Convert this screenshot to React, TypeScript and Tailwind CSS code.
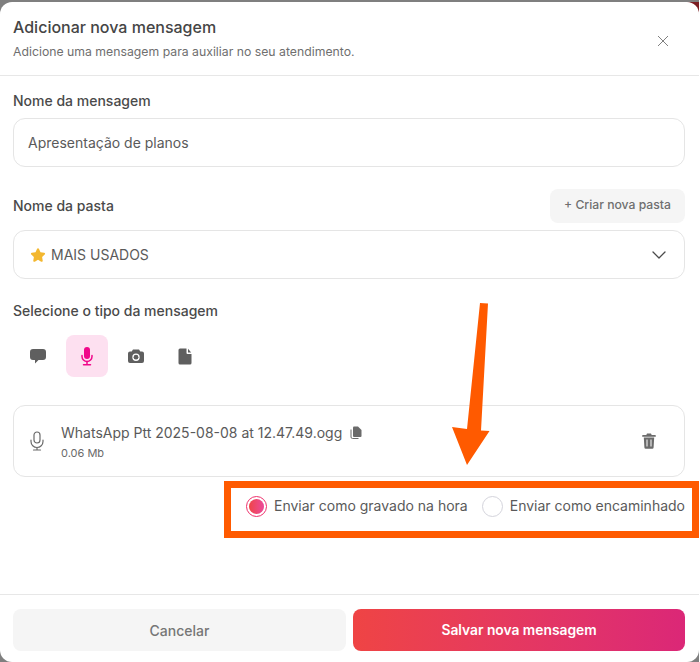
import React from "react";

const font = { fontFamily: "Inter, 'Liberation Sans', sans-serif" };

function Chevron() {
  return (
    <svg width="14" height="8" viewBox="0 0 14 8" fill="none" stroke="#4b4b4b" strokeWidth="1.3" strokeLinecap="round" strokeLinejoin="round">
      <path d="M1 1l6 6 6-6" />
    </svg>
  );
}

function Star() {
  return (
    <svg width="16" height="16" viewBox="0 0 16 16">
      <path d="M8 1.200c.5 0 .8.3 1 .8l1.500 3.200 3.600.5c1 .2 1.300 1.100.6 1.800l-2.600 2.500.6 3.600c.2 1-.7 1.500-1.500 1.100L8 12.800l-3.200 1.900c-.8.4-1.700-.1-1.500-1.100l.6-3.600L1.300 7.500c-.7-.7-.4-1.600.6-1.800l3.600-.5L7 2c.2-.5.5-.8 1-.8z" fill="#f3b72f" />
    </svg>
  );
}

function MicSolid({ color, size = 22 }: { color: string; size?: number }) {
  return (
    <svg width={size} height={size} viewBox="0 0 22 22" fill="none">
      <rect x="8" y="2" width="6" height="12" rx="3" fill={color} />
      <path d="M6 10.500v1a5 5 0 0 0 10 0v-1" stroke={color} strokeWidth="1.500" strokeLinecap="round" />
      <path d="M11 16.500v3M7.500 19.800h7" stroke={color} strokeWidth="1.500" strokeLinecap="round" />
    </svg>
  );
}

function MicOutline() {
  return (
    <svg width="16" height="20" viewBox="0 0 16 20" fill="none" stroke="#6b6b6b" strokeWidth="1.200" strokeLinecap="round">
      <rect x="5" y="1" width="6" height="11" rx="3" />
      <path d="M2 9v1.500a6 6 0 0 0 12 0V9M8 16.500V19M4.500 19h7" />
    </svg>
  );
}

export default function App() {
  return (
    <div className="relative w-[700px] h-[662px] overflow-hidden bg-white" style={font}>
      <div className="w-[699px] h-[662px] bg-[#7f7f7f] overflow-hidden relative">
        <div className="absolute top-0 right-0 w-[12px] h-[12px] bg-[#7c1d22]" />
        <div className="absolute top-0 right-0 w-full h-[2px] bg-[#7f7f7f]" />
        <div className="relative mt-[2px] h-[660px] w-[699px] rounded-[12px] bg-white flex flex-col text-[#4a4a4a]">
          <header className="h-[74px] shrink-0 border-b border-[#e7e7e7] pl-[13px] pr-[30px] flex items-center justify-between">
            <div>
              <h1 className="text-[16px] leading-[20px] font-medium text-[#454545]">Adicionar nova mensagem</h1>
              <p className="mt-[6px] text-[12.25px] leading-[18px] text-[#6f6f6f]">Adicione uma mensagem para auxiliar no seu atendimento.</p>
            </div>
            <svg className="mt-[4px]" width="12" height="12" viewBox="0 0 12 12" stroke="#808080" strokeWidth="1" fill="none">
              <path d="M1 1l10 10M11 1L1 11" />
            </svg>
          </header>

          <main className="flex-1 pl-[13px] pr-[14px]">
            <label className="block mt-[15px] text-[14px] leading-[20px] font-medium text-[#4a4a4a]">Nome da mensagem</label>
            <div className="mt-[7px] h-[49px] rounded-[12px] border border-[#e5e5e5] px-[14px] flex items-center text-[14px] text-[#5a5a5a]">
              Apresentação de planos
            </div>

            <div className="mt-[21px] flex items-center justify-between h-[35px]">
              <span className="text-[14px] font-medium text-[#4a4a4a]">Nome da pasta</span>
              <button className="h-[34px] w-[135px] rounded-[8px] bg-[#f5f5f5] text-[12.2px] font-medium text-[#6f6f6f]">+ Criar nova pasta</button>
            </div>
            <div className="mt-[7px] h-[49px] rounded-[12px] border border-[#e5e5e5] pl-[16px] pr-[18px] flex items-center justify-between text-[14px] text-[#5a5a5a]">
              <span className="flex items-center gap-[5px]"><Star />MAIS USADOS</span>
              <Chevron />
            </div>

            <div className="mt-[22px] text-[14px] leading-[20px] font-medium text-[#4a4a4a]">Selecione o tipo da mensagem</div>

            <div className="mt-[14px] flex items-center">
              <div className="w-[49px] h-[42px] flex items-center justify-center pl-[1px]">
                <svg width="18" height="17" viewBox="0 0 18 17"><path d="M4 1h10a3 3 0 0 1 3 3v5a3 3 0 0 1-3 3H9.500l-3.500 3.500V12H4a3 3 0 0 1-3-3V4a3 3 0 0 1 3-3z" fill="#5f5f5f" /></svg>
              </div>
              <div className="w-[42px] h-[42px] ml-[4px] rounded-[8px] bg-[#fde0f0] flex items-center justify-center">
                <MicSolid color="#f0088a" />
              </div>
              <div className="w-[56px] h-[42px] flex items-center justify-center">
                <svg width="18" height="16" viewBox="0 0 18 16">
                  <path fillRule="evenodd" d="M6 1.500h6l1.300 2H15a2 2 0 0 1 2 2V13a2 2 0 0 1-2 2H3a2 2 0 0 1-2-2V5.500a2 2 0 0 1 2-2h1.700L6 1.500zM9 5.500a3.700 3.700 0 1 0 0 7.400 3.700 3.700 0 0 0 0-7.400z" fill="#5f5f5f" />
                  <circle cx="9" cy="9.200" r="2.400" fill="#5f5f5f" />
                </svg>
              </div>
              <div className="w-[42px] h-[42px] flex items-center justify-center">
                <svg width="14" height="17" viewBox="0 0 14 17">
                  <path d="M2 .5h6.500V5a1 1 0 0 0 1 1H13.500v9a1.500 1.500 0 0 1-1.500 1.500H2A1.500 1.500 0 0 1 .5 15V2A1.500 1.500 0 0 1 2 .5zM10 .8 13.200 4.500H10z" fill="#5f5f5f" />
                </svg>
              </div>
            </div>

            <div className="mt-[28px] h-[72px] rounded-[12px] border border-[#e5e5e5] pl-[15px] pr-[28px] flex items-center">
              <MicOutline />
              <div className="ml-[16px] flex-1">
                <div className="flex items-center gap-[8px] text-[14px] leading-[20px] text-[#5a5a5a]">
                  WhatsApp Ptt 2025-08-08 at 12.47.49.ogg
                  <svg width="12" height="13" viewBox="0 0 12 13"><path d="M4 .5h4l3.500 3.500v6a1 1 0 0 1-1 1H4a1 1 0 0 1-1-1v-8.500a1 1 0 0 1 1-1z" fill="#6b6b6b" /><path d="M1 3.500v7.500a1.500 1.500 0 0 0 1.500 1.500h6" stroke="#6b6b6b" fill="none" /></svg>
                </div>
                <div className="mt-[3px] text-[11px] leading-[14px] text-[#6a6a6a]">0.06 Mb</div>
              </div>
              <svg width="14" height="16" viewBox="0 0 14 16" fill="#6b6b6b">
                <path fillRule="evenodd" d="M5 .5h4l.7 1.500H13a.8.800 0 0 1 0 1.800H1A.8.800 0 0 1 1 2h3.300L5 .5zM1.800 4.500h10.400l-.6 10a1.300 1.300 0 0 1-1.300 1.200H3.700a1.300 1.300 0 0 1-1.300-1.200l-.6-10zM4.500 6.500v7h1v-7h-1zm4 0v7h1v-7h-1z" />
              </svg>
            </div>

            <div className="mt-[14px] flex items-center justify-end gap-[14px] text-[14px] leading-[30px] text-[#5a5a5a]">
              <span className="flex items-center gap-[7px]">
                <span className="w-[21px] h-[21px] rounded-full border border-[#ee2f6b] flex items-center justify-center">
                  <span className="w-[15px] h-[15px] rounded-full bg-gradient-to-r from-[#ef4444] to-[#ec4899]" />
                </span>
                Enviar como gravado na hora
              </span>
              <span className="flex items-center gap-[7px]">
                <span className="w-[21px] h-[21px] rounded-full border border-[#d4d4dc]" />
                Enviar como encaminhado
              </span>
            </div>
          </main>

          <footer className="h-[68px] shrink-0 border-t border-[#e7e7e7] pl-[13px] pr-[14px] pt-[14px] flex gap-[7px]">
            <button className="w-[333px] h-[42px] rounded-[8px] bg-[#f5f5f5] text-[14px] font-medium text-[#767676]">Cancelar</button>
            <button className="flex-1 h-[42px] rounded-[8px] bg-gradient-to-r from-[#ef4444] to-[#db2777] text-[13.8px] font-semibold text-white">Salvar nova mensagem</button>
          </footer>
        </div>
      </div>

      <div className="absolute left-[224px] top-[481px] w-[475px] h-[57px] border-[7px] border-[#ff5a00]" />
      <svg className="absolute left-[445px] top-[295px]" width="50" height="175" viewBox="0 0 50 175">
        <path d="M35 8l8 .5-7 127 8.500.5-22.500 34-15-38 15 2z" fill="#ff5a00" />
      </svg>
    </div>
  );
}
